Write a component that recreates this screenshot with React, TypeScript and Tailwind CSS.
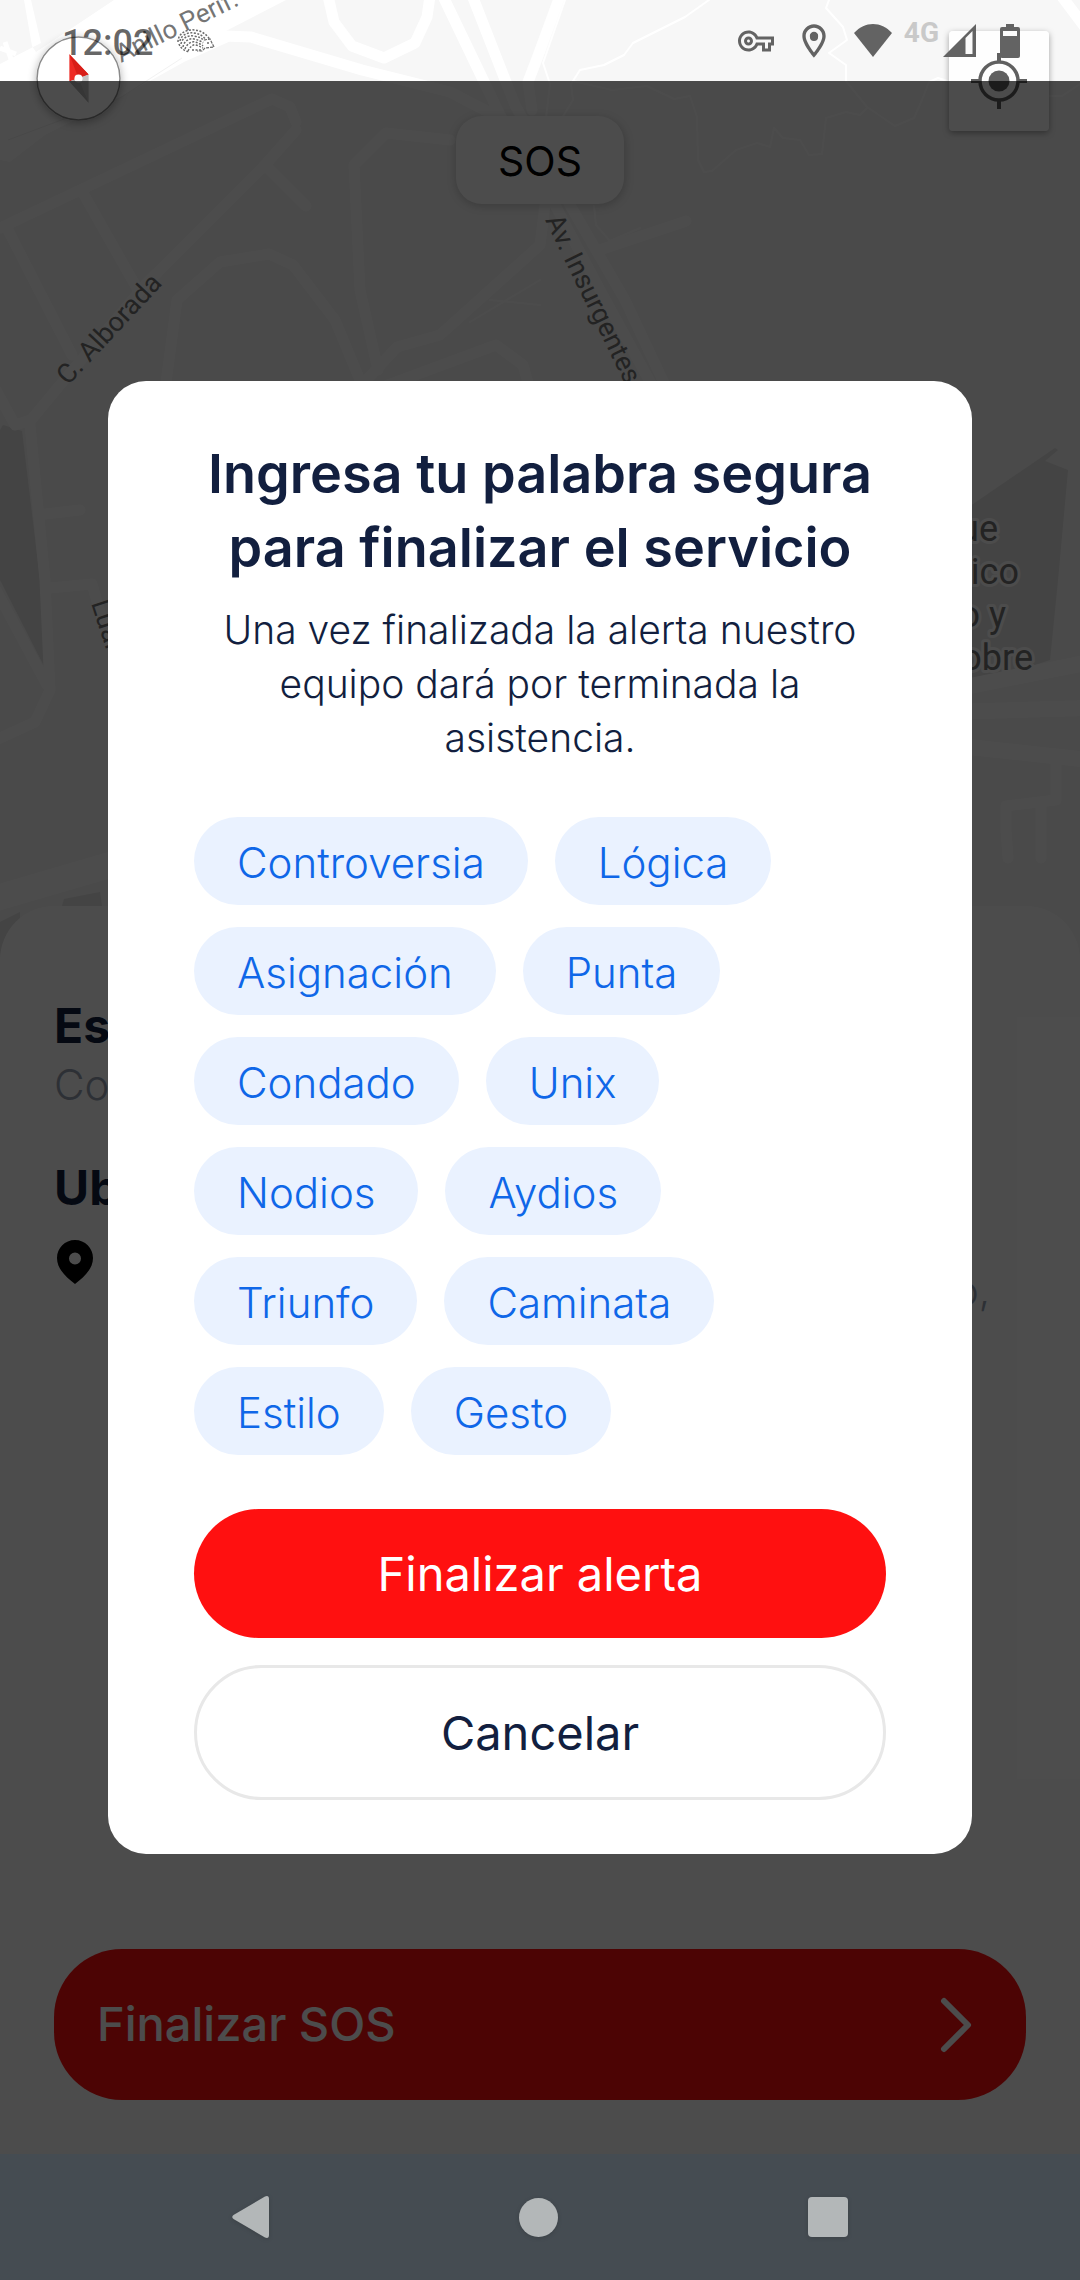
import { useState } from "react";
import { MdOutlineLocationOn, MdOutlineVpnKey } from "react-icons/md";

const WORDS = [
  "Controversia",
  "Lógica",
  "Asignación",
  "Punta",
  "Condado",
  "Unix",
  "Nodios",
  "Aydios",
  "Triunfo",
  "Caminata",
  "Estilo",
  "Gesto",
];

function MapCanvas() {
  return (
    <svg
      className="h-full w-full"
      viewBox="0 0 1080 960"
      preserveAspectRatio="xMidYMin slice"
      aria-hidden="true"
    >
      <rect width="1080" height="960" fill="#f7f7f7" />
      <g fill="#e3e3e3">
        <path d="M0 430 L3 425 L22 431 L40 580 L45 668 L0 580Z" />
        <path d="M960 513 L1055 448 L1058 450 L1045 461 L1068 470 L1058 580 L1050 660 L960 690Z" />
        <path d="M62 906 L64 899 L100 892 L102 906Z" />
        <path d="M0 922 L20 912 L20 960 L0 960Z" />
      </g>
      <path
        d="M0 64 L41 43 L31 0 L24 0 L32 46 L36 52 L114 0 L286 0 L224 32 L251 32 L184 62 L130 92 L45 135 L10 162 L0 160Z"
        fill="#fff"
      />
      <path d="M0 48 L16 54 M5 42 L12 62" stroke="#fff" strokeWidth="5" />
      <path d="M8 140 L120 98 L182 58" stroke="#f2f2f2" strokeWidth="1" fill="none" />
      <g fill="none" stroke="#fff" strokeLinecap="round" strokeLinejoin="round">
        <g strokeWidth="11">
          <path d="M224 36 L251 37 L362 70 L450 92 L500 118" />
          <path d="M328 -4 L334 22 L352 46 L384 58 L415 43 L427 17 L430 -4" />
          <path d="M440 -10 L500 115 L555 205 L600 290 L660 400" />
          <path d="M470 -10 L515 105 L570 205 L625 300 L672 400" />
          <path d="M560 -4 L538 56 L528 82 L532 110" />
          <path d="M1060 -6 L1084 26" />
          <path d="M0 228 L272 99 L290 107 L296 122" />
          <path d="M83 193 L138 290" />
          <path d="M8 230 L72 355" />
          <path d="M296 130 L265 165 L145 285 L60 385 L31 420 L15 425 L-4 390" />
          <path d="M265 165 L306 206" />
          <path d="M165 390 L177 300 L220 262 L269 254 L293 265 L335 320 L362 385" />
          <path d="M450 140 L386 133 L354 165 L360 290 L378 370" />
          <path d="M362 385 L397 347 L440 335 L540 245 L545 205" />
          <path d="M380 388 L496 345 L523 365 L530 390" />
          <path d="M600 250 L686 221" />
          <path d="M30 425 L45 580 L50 690 L35 722 L-4 740" />
          <path d="M-4 590 L47 685" />
          <path d="M45 514 L80 510" />
          <path d="M50 588 L92 584 L108 640" />
          <path d="M1056 760 L1056 800 L1006 806 L1006 830 L1008 858" />
          <path d="M1041 806 L1041 858" />
        </g>
        <g strokeWidth="16">
          <path d="M950 690 L1090 662" />
          <path d="M950 712 L1090 708" />
          <path d="M950 745 L1090 760" />
        </g>
        <path d="M-10 900 L120 862" strokeWidth="26" />
        <g strokeWidth="2">
          <path d="M565 0 L543 63 L550 84 L546 118" />
          <path d="M709 0 L685 17 L633 43 L624 55 L604 65 L580 70 L571 84 L573 100 L562 118" />
          <path d="M573 81 L612 90 L647 86 L674 99 L690 96 L697 117 L698 160 L704 172 L712 171 L736 150 L757 143 L770 147 L774 128 L783 138 L800 140 L809 155 L822 154 L826 118 L846 112 L860 115 L867 108" />
          <path d="M829 0 L826 8 L843 27 L847 40 L829 53 L846 65 L846 81 L867 107 L895 126 L914 118 L922 100 L929 82 L938 78 L948 81 L1030 96 L1062 96 L1080 84" />
          <path d="M594 206 L596 225 L610 241 L640 228" />
          <path d="M470 322 L540 280 M490 300 L540 305" />
        </g>
      </g>
      <g fill="#757575" fontFamily="Roboto, sans-serif" fontSize="27">
        <text transform="translate(121 63) rotate(-26)" fontSize="26">
          Anillo Perif.
        </text>
        <text transform="translate(68 386) rotate(-47)">C. Alborada</text>
        <text transform="translate(545 220) rotate(64)">Av. Insurgentes</text>
        <text transform="translate(91 603) rotate(72)">Luar</text>
        <g
          fontSize="36"
          textAnchor="end"
          stroke="#fff"
          strokeWidth="6"
          strokeLinejoin="round"
          paintOrder="stroke"
        >
          <text x="998" y="541">Parque</text>
          <text x="1019" y="584">Ecológico</text>
          <text x="1006" y="627">Centro y</text>
          <text x="1033" y="670">del Cobre</text>
        </g>
      </g>
    </svg>
  );
}

function Compass() {
  return (
    <svg className="size-full" viewBox="0 0 84 84" aria-hidden="true">
      <circle cx="42" cy="42" r="41" fill="#fff" stroke="#8a8a8a" strokeWidth="1.5" />
      <path d="M33 18 L52 38 L42 42 L33 45Z" fill="#ee2a24" />
      <path d="M33 18 L52 38 L42 42Z" fill="#d81e18" />
      <path d="M33 45 L52 38 L52 66Z" fill="#c4c4c4" />
      <path d="M33 45 L42 42 L52 66Z" fill="#b4b4b4" />
      <circle cx="42" cy="42" r="4" fill="#fff" />
    </svg>
  );
}

function Crosshair() {
  return (
    <svg className="size-14" viewBox="0 0 56 56" fill="none" aria-hidden="true">
      <circle cx="28" cy="28" r="19" stroke="#606060" strokeWidth="3.5" />
      <circle cx="28" cy="28" r="10.5" fill="#606060" />
      <path d="M28 0V9M28 47V56M0 28H9M47 28H56" stroke="#606060" strokeWidth="4" />
    </svg>
  );
}

function Hedgehog() {
  return (
    <svg width="38" height="24" viewBox="0 0 38 24" fill="none" stroke="#6b6b6b" aria-hidden="true">
      <g strokeWidth="1.5" strokeDasharray="2 1.5">
        <path d="M1 13 C1 4 10 0 18 1 C26 2 31 7 33 11" />
        <path d="M3 12 C4 6 11 3 17 4 C24 5 27 8 29 11" />
        <path d="M4 15 C5 9 11 6 17 7 C22 8 25 9 27 12" />
        <path d="M6 18 C7 12 12 9 17 10 C21 11 24 12 26 14" />
        <path d="M8 20 C10 15 14 12 18 13 C21 14 24 15 26 17" />
        <path d="M11 22 C13 18 16 15 19 16 C22 17 24 18 26 19" />
        <path d="M2 15 C4 20 8 22 12 23 M15 21 L24 21" />
      </g>
      <path d="M27 11 L33 10 L37 18 L28 19 L25 22 L20 22" strokeWidth="1.2" strokeDasharray="3 1" />
      <circle cx="31" cy="14" r="1" fill="#6b6b6b" stroke="none" />
    </svg>
  );
}

function StatusBar() {
  return (
    <header className="absolute inset-x-0 top-0 z-30 flex h-[81px] items-center justify-between pr-[60px] pl-[62px] font-['Roboto',sans-serif] text-black/60">
      <div className="flex items-center gap-6">
        <time className="pt-1 text-4xl font-medium">12:02</time>
        <Hedgehog />
      </div>
      <div className="flex items-center">
        <MdOutlineVpnKey className="mr-5 size-9" aria-hidden="true" />
        <span className="relative mr-5 block">
          <MdOutlineLocationOn className="size-10" aria-hidden="true" />
          <span className="absolute top-3 left-4 size-2 rounded-full bg-[#636363]" />
        </span>
        <svg className="mr-3" width="38" height="34" viewBox="0 0 38 34" fill="currentColor" aria-hidden="true">
          <path d="M0 9 C11 -3 27 -3 38 9 L19 33Z" />
        </svg>
        <span className="mr-1 pb-4 text-[28px] leading-7 font-bold text-[#c9c9c9]">4G</span>
        <svg className="mr-6" width="33" height="33" viewBox="0 0 33 33" aria-hidden="true">
          <path d="M0 33 L33 0 V33Z" fill="#636363" />
          <path d="M22.500 14 L29.500 7 V30 H22.500Z" fill="#fafafa" />
        </svg>
        <svg width="20" height="34" viewBox="0 0 20 34" aria-hidden="true">
          <path
            d="M6 0H14V3H18Q20 3 20 5V32Q20 34 18 34H2Q0 34 0 32V5Q0 3 2 3H6Z"
            fill="#636363"
          />
          <rect x="3" y="7" width="14" height="5" fill="#fafafa" />
        </svg>
      </div>
    </header>
  );
}

function MapSection() {
  return (
    <section className="relative h-[960px]" aria-label="Mapa">
      <MapCanvas />
      <button
        type="button"
        aria-label="Orientar al norte"
        className="absolute top-9 left-9 size-[85px] rounded-full shadow-[0_2px_8px_rgba(0,0,0,0.3)]"
      >
        <Compass />
      </button>
      <h1 className="absolute top-[116px] left-1/2 flex h-[88px] -translate-x-1/2 items-center rounded-[26px] bg-white px-[42px] pt-1 text-[41px] text-black shadow-[0_2px_10px_rgba(0,0,0,0.2)]">
        SOS
      </h1>
      <button
        type="button"
        aria-label="Mi ubicación"
        className="absolute top-[31px] right-[31px] flex size-[100px] items-center justify-center rounded-sm bg-white/85 shadow-[0_2px_6px_rgba(0,0,0,0.35)]"
      >
        <Crosshair />
      </button>
    </section>
  );
}

function AlertSheet() {
  return (
    <section className="relative -mt-[54px] flex flex-1 flex-col rounded-t-[54px] bg-white px-[54px] pt-[88px] pb-[54px] text-[#121f3f]">
      <h2 className="text-5xl leading-[64px] font-bold">Estado</h2>
      <p className="text-[42px] leading-[54px] font-light text-[#98a2b3]">Compartiendo</p>
      <h2 className="mt-11 text-5xl leading-[64px] font-bold">Ubicación</h2>
      <div className="mt-3 flex items-start gap-8">
        <svg className="mt-2 shrink-0" width="42" height="44" viewBox="0 0 42 44" aria-hidden="true">
          <path
            fillRule="evenodd"
            d="M21 0 C31 0 39 8 39 18 C39 29 30 37 21 44 C12 37 3 29 3 18 C3 8 11 0 21 0Z M21 12.500 A6 6 0 1 0 21 24.500 A6 6 0 1 0 21 12.500Z"
          />
        </svg>
        <p className="flex-1 pt-8 pr-9 text-right text-[40px] leading-[54px] font-light text-[#98a2b3]">
          Centro,
        </p>
      </div>
      <button
        type="button"
        className="mt-auto flex h-[151px] items-center justify-between rounded-[68px] bg-[#ff1010] pr-[52px] pl-[43px] text-[47px] font-medium text-white"
      >
        Finalizar SOS
        <svg width="36" height="60" viewBox="0 0 36 60" fill="none" aria-hidden="true">
          <path
            d="M6 6 L30 30 L6 54"
            stroke="currentColor"
            strokeWidth="6"
            strokeLinecap="round"
            strokeLinejoin="round"
          />
        </svg>
      </button>
    </section>
  );
}

function SafeWordDialog() {
  const [selected, setSelected] = useState<string | null>(null);
  return (
    <div className="absolute inset-x-0 top-[81px] bottom-[126px] z-20 flex items-center justify-center bg-black/70">
      <div
        role="dialog"
        aria-modal="true"
        aria-labelledby="safe-word-title"
        className="flex w-4/5 flex-col rounded-[38px] bg-white px-[86px] pt-14 pb-[54px] text-[#121f3f]"
      >
        <h2 id="safe-word-title" className="text-center text-[54px] leading-[74px] font-semibold">
          Ingresa tu palabra segura para finalizar el servicio
        </h2>
        <p className="mt-[18px] text-center text-[39px] leading-[54px] font-light">
          Una vez finalizada la alerta nuestro equipo dará por terminada la asistencia.
        </p>
        <div className="mt-[52px] flex flex-wrap gap-x-[27px] gap-y-[22px]">
          {WORDS.map((word) => (
            <button
              key={word}
              type="button"
              aria-pressed={selected === word}
              onClick={() => setSelected(word)}
              className="h-[88px] rounded-full bg-[#eaf2ff] px-[43px] pt-0.5 text-[42px] font-light text-[#0f67e8]"
            >
              {word}
            </button>
          ))}
        </div>
        <button
          type="button"
          className="mt-[54px] h-[129px] rounded-full bg-[#ff1010] pt-0.5 text-[47px] text-white"
        >
          Finalizar alerta
        </button>
        <button
          type="button"
          className="mt-[27px] h-[135px] rounded-full border-[3px] border-[#e8e8e8] bg-white pt-0.5 text-[47px]"
        >
          Cancelar
        </button>
      </div>
    </div>
  );
}

function NavigationBar() {
  return (
    <nav className="relative z-30 h-[126px] bg-[#454c52] text-[#b3b7b8]" aria-label="Sistema">
      <div className="mx-auto flex h-full w-[616px] items-center justify-between">
        <button type="button" aria-label="Atrás" className="drop-shadow-sm">
          <svg width="37" height="42" viewBox="0 0 37 42" fill="currentColor" aria-hidden="true">
            <path d="M33 0.500 Q37 -1 37 3 V39 Q37 43 33 41.500 L1.500 23 Q-1 21 1.500 19Z" />
          </svg>
        </button>
        <button type="button" aria-label="Inicio" className="size-[39px] rounded-full bg-current drop-shadow-sm" />
        <button type="button" aria-label="Recientes" className="size-10 rounded-sm bg-current drop-shadow-sm" />
      </div>
    </nav>
  );
}

export default function App() {
  return (
    <main className="relative flex min-h-screen flex-col overflow-hidden bg-white font-['Inter',sans-serif]">
      <StatusBar />
      <MapSection />
      <AlertSheet />
      <NavigationBar />
      <SafeWordDialog />
    </main>
  );
}
